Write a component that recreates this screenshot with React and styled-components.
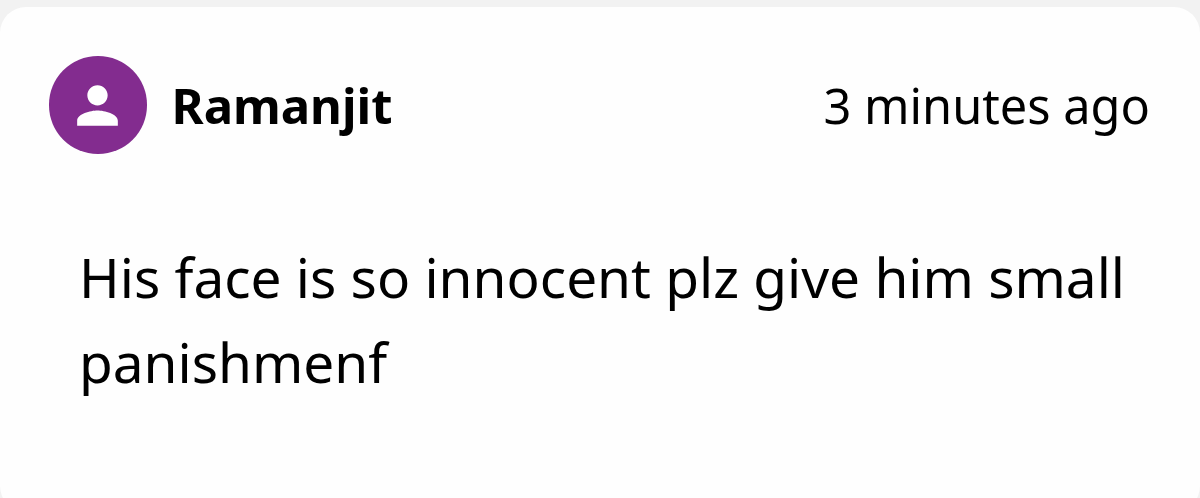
import React from 'react';
import styled, {createGlobalStyle} from 'styled-components';

const App = () => {
    return (
        <Wrap>
            <GlobalStyle />
            <Card>
                <Header>
                    <Avatar>
                        <svg viewBox="0 0 24 24" fill="currentColor">
                            <path d="M12 12c2.21 0 4-1.79 4-4s-1.79-4-4-4-4 1.79-4 4 1.79 4 4 4zm0 2c-2.67 0-8 1.34-8 4v2h16v-2c0-2.66-5.33-4-8-4z" />
                        </svg>
                    </Avatar>
                    <UserName>Ramanjit</UserName>
                    <Time>3 minutes ago</Time>
                </Header>
                <Comment>His face is so innocent plz give him small panishmenf</Comment>
            </Card>
        </Wrap>
    );
};

export default App;

const GlobalStyle = createGlobalStyle`
    * {
        box-sizing: border-box;
    }
    body {
        margin: 0;
    }
`;
const Wrap = styled.div`
    height: 498px;
    padding-top: 7px;
    overflow: hidden;
    background: #f2f2f2;
    color: #000;
    font-family: 'Noto Sans', sans-serif;
`;
const Card = styled.article`
    height: 505px;
    padding: 49px 50px 0 49px;
    border-radius: 26px;
    background: #fefefe;
`;
const Header = styled.header`
    display: flex;
    align-items: center;
    height: 98px;
`;
const Avatar = styled.div`
    display: flex;
    align-items: center;
    justify-content: center;
    width: 97.5px;
    height: 97.5px;
    border-radius: 50%;
    background: #832c8f;
    color: #fff;

    svg {
        width: 61px;
        height: 61px;
    }
`;
const UserName = styled.span`
    margin-left: 25px;
    font-size: 49px;
    font-weight: 700;
    line-height: 62px;
`;
const Time = styled.time`
    margin-left: auto;
    font-size: 48.7px;
    line-height: 62px;
`;
const Comment = styled.p`
    margin: 80px 0 0 30px;
    font-size: 54.95px;
    line-height: 85px;
`;
